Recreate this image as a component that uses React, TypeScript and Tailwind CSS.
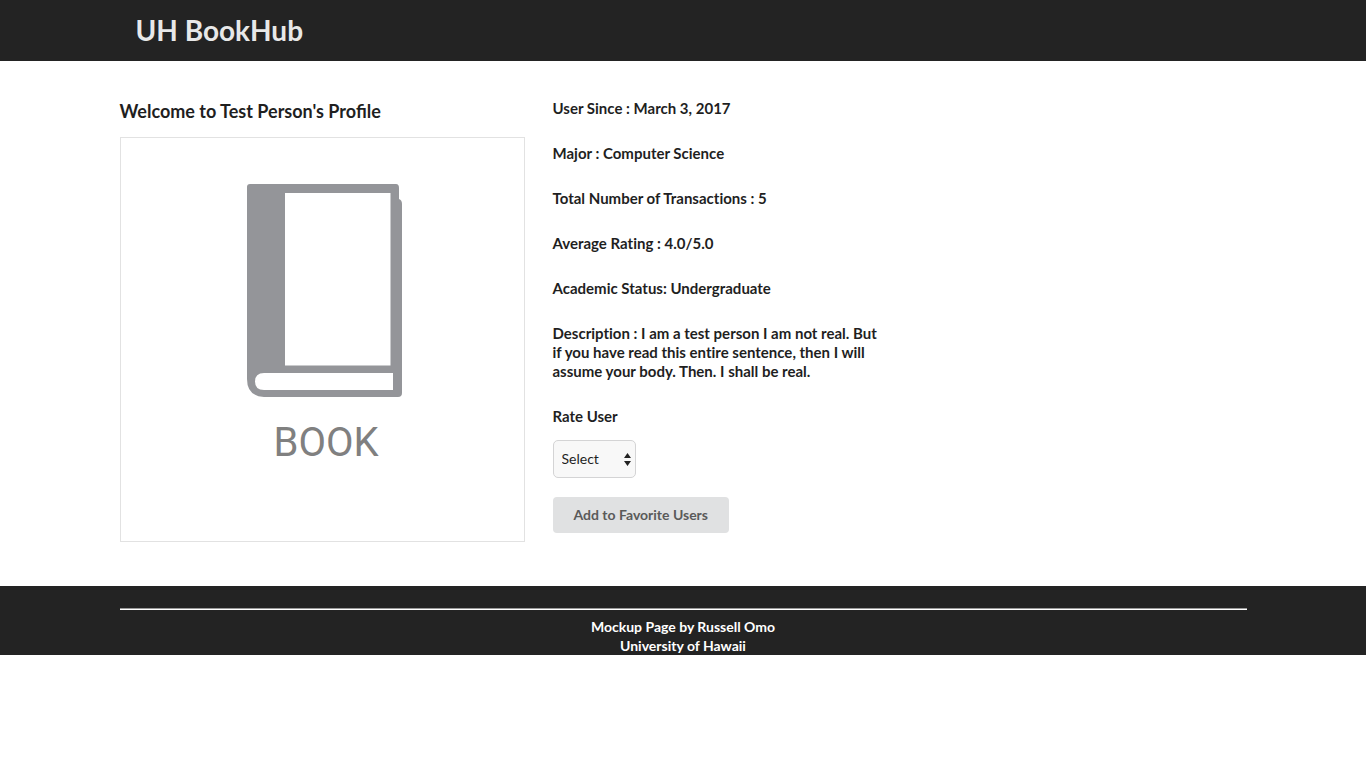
const details = [
  'User Since : March 3, 2017',
  'Major : Computer Science',
  'Total Number of Transactions : 5',
  'Average Rating : 4.0/5.0',
  'Academic Status: Undergraduate',
  'Description : I am a test person I am not real. But if you have read this entire sentence, then I will assume your body. Then. I shall be real.',
];

function BookPicture() {
  return (
    <svg viewBox="0 0 403 403" role="img" aria-label="Book" className="block w-full">
      <path
        fill="#949599"
        fillRule="evenodd"
        d="M129 46H275Q278 46 278 50V61Q281 62 281 66V255Q281 259 277 259H143Q126 258 126 241V49Q126 46 129 46ZM164 55V227.500H269.500V55ZM143 235Q134 235 134 243.500Q134 252 143 252H272V235Z"
      />
      <text
        x="205"
        y="318"
        textAnchor="middle"
        fill="#808080"
        className="font-[Roboto,sans-serif] text-[40px]"
      >
        BOOK
      </text>
    </svg>
  );
}

function Header() {
  return (
    <header className="bg-[#232323]">
      <div className="mx-auto max-w-[1127px] px-4 py-3">
        <h1 className="text-[28px] leading-[37px] font-bold text-[#e8e8e8]">UH BookHub</h1>
      </div>
    </header>
  );
}

function Profile() {
  return (
    <main className="mx-auto flex max-w-[1127px] flex-wrap gap-7 pt-[38px] pb-11">
      <section className="w-full max-w-[405px] pt-px">
        <h2 className="mb-3.5 text-lg leading-[23px] font-bold">Welcome to Test Person's Profile</h2>
        <div className="border border-[#e2e2e2]">
          <BookPicture />
        </div>
      </section>
      <section className="w-full max-w-[330px] text-[15px] leading-[19px] font-bold [font-variant-ligatures:none]">
        <div className="flex flex-col gap-[26px]">
          {details.map((text) => (
            <p key={text}>{text}</p>
          ))}
          <label htmlFor="rating">Rate User</label>
        </div>
        <div className="relative mt-3.5 w-[83px]">
          <select
            id="rating"
            className="block h-[38px] w-full appearance-none rounded-[5px] border border-[#d4d4d5] bg-[#f8f8f8] pl-2 text-sm font-normal"
          >
            <option>Select</option>
            <option>1</option>
            <option>2</option>
            <option>3</option>
            <option>4</option>
            <option>5</option>
          </select>
          <svg
            viewBox="0 0 7 13"
            aria-hidden="true"
            className="pointer-events-none absolute top-[13px] right-[5px] h-[13px] w-[7px]"
          >
            <path fill="#232323" d="M0 5L3.500 0L7 5ZM0 8H7L3.500 13Z" />
          </svg>
        </div>
        <button
          type="button"
          className="mt-[19px] block h-9 rounded bg-[#e0e1e2] px-[21px] text-sm font-bold text-[#5a5a5a]"
        >
          Add to Favorite Users
        </button>
      </section>
    </main>
  );
}

function Footer() {
  return (
    <footer className="bg-[#232323] pt-[22px]">
      <div className="mx-auto max-w-[1127px]">
        <hr className="h-0.5 border-t border-b border-t-[#999999] border-b-white" />
        <p className="pt-[7px] text-center text-sm leading-[19px] font-bold text-white">
          Mockup Page by Russell Omo
          <br />
          University of Hawaii
        </p>
      </div>
    </footer>
  );
}

export default function App() {
  return (
    <div className="bg-white font-[Lato,sans-serif] text-[#1f1f1f]">
      <Header />
      <Profile />
      <Footer />
    </div>
  );
}
